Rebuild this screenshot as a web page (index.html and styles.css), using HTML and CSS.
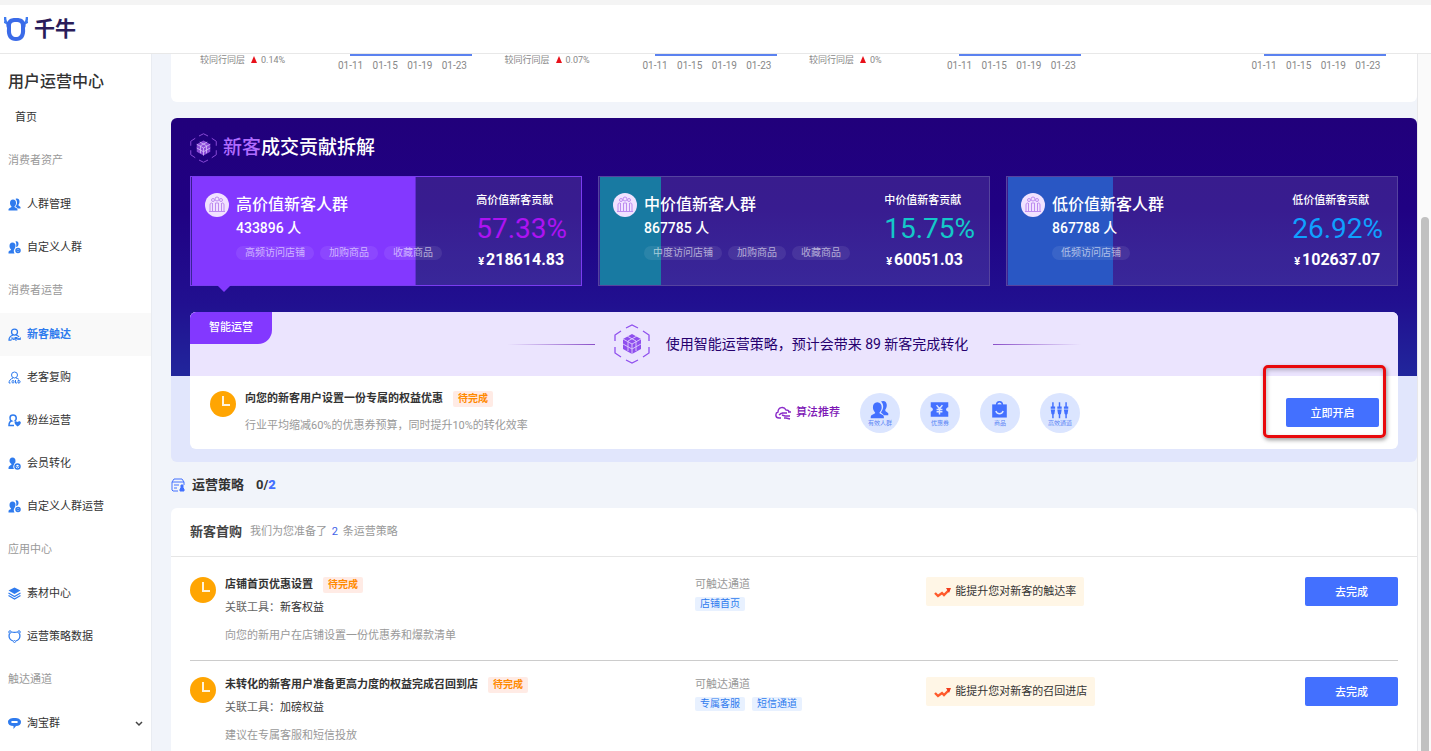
FILE: index.html
```
<!DOCTYPE html>
<html lang="zh-CN">
<head>
    <meta charset="UTF-8">
    <meta name="viewport" content="width=device-width, initial-scale=1.0">
    <title>千牛 - 用户运营中心</title>
    <link rel="stylesheet" href="styles.css">
</head>
<body>

<!-- icon set -->
<svg class="sprite" aria-hidden="true">
    <symbol id="i-group" viewBox="0 0 26 26">
        <path d="M15 2c4-2 8 0 8 5 0 3-1 5-2 6v2l4 3v3h-6c-1-2-3-3-4-4 2-3 3-5 3-8 0-3-1-5-3-7z"/>
        <path d="M10 3c4 0 6 3 6 7 0 3-1 5-3 7v1l5 3c1 1 1 2 1 4H1c0-2 0-3 1-4l5-3v-1c-2-2-3-4-3-7 0-4 2-7 6-7z"/>
    </symbol>
    <symbol id="i-group-plus" viewBox="0 0 26 26">
        <path d="M15 1c4-1 6 1 6 5 0 2-1 4-2 5l-3 1c1-4 1-8-1-11z"/>
        <path d="M9 3c4 0 6 3 6 7 0 2-1 4-2 6-2 2-2 6 0 9H1c0-2 0-4 1-5l4-2v-1c-2-2-3-4-3-7 0-4 2-7 6-7z"/>
        <circle cx="20" cy="19" r="4" fill="none" stroke="currentColor" stroke-width="3"/>
        <path d="M19 16h2v6h-2zM17 18h6v2h-6z"/>
    </symbol>
    <symbol id="i-new" viewBox="0 0 26 26">
        <g fill="none" stroke="currentColor" stroke-width="2.500"><circle cx="13" cy="8" r="6"/><path d="M10 14c-5 2-8 5-8 10h5M16 14c3 1 5 2 6 4"/></g>
        <path d="M8 24v-5l4 5v-5M18 19h-4v5h4M14 21h4M19 19l1 5 2-4 2 4 1-5" fill="none" stroke="currentColor" stroke-width="2"/>
    </symbol>
    <symbol id="i-old" viewBox="0 0 26 26">
        <g fill="none" stroke="currentColor" stroke-width="2"><circle cx="13" cy="8" r="6"/><path d="M10 14c-5 2-8 5-8 10h3M16 14c3 1 5 2 6 3"/>
        <rect x="8" y="19" width="4" height="5" rx="2"/><path d="M15 18v6h3M20 19v5h2c3 0 3-5 0-5z"/></g>
    </symbol>
    <symbol id="i-heart" viewBox="0 0 26 26">
        <path d="M10 2c8 0 8 10 3 12M10 2C2 2 3 12 7 14c-4 1-5 4-5 9h10" fill="none" stroke="currentColor" stroke-width="3"/>
        <path d="M19 25c-9-6-6-12-2-10l2 1c5-5 12 2 0 9z"/>
    </symbol>
    <symbol id="i-member" viewBox="0 0 26 26">
        <path d="M9 1c4 0 6 3 6 7 0 3-1 4-3 6v1c-2 3-2 6 0 9H1c0-3 0-5 2-6l4-3v-1C4 12 3 10 3 8c0-4 2-7 6-7z"/>
        <circle cx="19" cy="19" r="5" fill="none" stroke="currentColor" stroke-width="3"/>
        <path d="M16 17l3 4 3-4" fill="none" stroke="currentColor" stroke-width="2"/>
    </symbol>
    <symbol id="i-layers" viewBox="0 0 26 26">
        <path d="M13 1l12 6-12 7L1 7z"/>
        <path d="M1 12l12 7 12-7M1 17l12 7 12-7" fill="none" stroke="currentColor" stroke-width="2.500"/>
    </symbol>
    <symbol id="i-shield" viewBox="0 0 26 26">
        <path d="M7 4c4 1 8 1 12 0M23 7c2 6 0 12-7 15M10 22C3 19 1 13 3 7" fill="none" stroke="currentColor" stroke-width="2.500"/>
        <g fill="none" stroke="currentColor" stroke-width="2"><circle cx="4" cy="4" r="2.500"/><circle cx="22" cy="4" r="2.500"/><circle cx="13" cy="23" r="2"/></g>
    </symbol>
    <symbol id="i-chat" viewBox="0 0 26 26">
        <path fill-rule="evenodd" d="M13 2c8 0 13 3 13 8s-4 8-10 8l-5 6v-6C4 18 0 15 0 10s5-8 13-8zM8 8c-2 0-2 4 0 4h10c2 0 2-4 0-4z"/>
    </symbol>
    <symbol id="i-cube" viewBox="0 0 36 40">
        <path d="M12 4l6-3 6 3M29 7l6 4v6M35 23v6l-6 4M24 36l-6 3-6-3M7 33l-6-4v-6M1 17v-6l6-4" fill="none" stroke="currentColor" stroke-width="1.300"/>
        <path d="M18 10l9 5v10l-9 5-9-5V15z"/>
        <path class="cube-lines" d="M9 15l9 5 9-5M18 20v10M13 12l9 5v10M23 12l-9 5v10M9 20l9 5 9-5"/>
    </symbol>
    <symbol id="i-crowd" viewBox="0 0 24 24">
        <circle cx="12" cy="12" r="12" fill="#f1e2ff"/>
        <g fill="none" stroke="#bd8cf0" stroke-width="1"><circle cx="12" cy="6" r="2"/><circle cx="8" cy="7" r="1.500"/><circle cx="16" cy="7" r="1.500"/>
        <path d="M10.500 18v-8h3v8M7.500 18v-8M16.500 18v-8M5 18v-6c0-2 1-2 2-2M19 18v-6c0-2-1-2-2-2M4 18.500h16"/></g>
    </symbol>
    <symbol id="i-clock" viewBox="0 0 26 26">
        <circle cx="13" cy="13" r="13" fill="#ffa502"/>
        <path d="M13 5v9h7" fill="none" stroke="#fff3dc" stroke-width="2"/>
    </symbol>
    <symbol id="i-trend" viewBox="0 0 17 12">
        <path d="M1 7l3 3 4-3 2 2 5-5" fill="none" stroke="#ff5a2b" stroke-width="2.400"/>
        <path d="M12 2h5l-2 5z" fill="#f23c1d"/>
    </symbol>
</svg>

<div class="top-strip"></div>
<header class="header">
    <svg class="logo" viewBox="0 0 24 26" aria-hidden="true">
        <path d="M1 1c0 4 1 6 3 7M23 1c0 4-1 6-3 7" fill="none" stroke="#3f7bf0" stroke-width="2.500"/>
        <path d="M0 6l5 2M24 6l-5 2" stroke="#3f7bf0" stroke-width="2"/>
        <path fill="#3b6be8" fill-rule="evenodd" d="M4 5c2-3 5-3 8-3s6 0 8 3c2 2 2 5 1 7 1 9-3 13-9 13S2 21 3 12C2 10 2 7 4 5zM12 6c-4 0-5 1-5 4v5c0 4 2 6 5 6s5-2 5-6v-5c0-3-1-4-5-4z"/>
    </svg>
    <span class="brand">千牛</span>
</header>

<div class="layout">
    <nav class="sidebar">
        <h1>用户运营中心</h1>
        <a class="home" href="#">首页</a>
        <h2>消费者资产</h2>
        <a href="#"><svg><use href="#i-group"/></svg>人群管理</a>
        <a href="#"><svg><use href="#i-group-plus"/></svg>自定义人群</a>
        <h2>消费者运营</h2>
        <a class="active" href="#"><svg><use href="#i-new"/></svg>新客触达</a>
        <a href="#"><svg><use href="#i-old"/></svg>老客复购</a>
        <a href="#"><svg><use href="#i-heart"/></svg>粉丝运营</a>
        <a href="#"><svg><use href="#i-member"/></svg>会员转化</a>
        <a href="#"><svg><use href="#i-group-plus"/></svg>自定义人群运营</a>
        <h2>应用中心</h2>
        <a href="#"><svg><use href="#i-layers"/></svg>素材中心</a>
        <a href="#"><svg><use href="#i-shield"/></svg>运营策略数据</a>
        <h2>触达通道</h2>
        <a href="#"><svg><use href="#i-chat"/></svg>淘宝群
            <svg class="chevron outline" viewBox="0 0 8 8"><path d="M1 2l3 3 3-3" stroke="#444" stroke-width="1.500"/></svg>
        </a>
    </nav>

    <main class="content">
        <section class="trends">
            <div class="trend">
                <div class="compare">较同行同层<i></i>0.14%</div>
                <div class="axis"><div class="axis-line"></div><div class="dates"><span>01-11</span><span>01-15</span><span>01-19</span><span>01-23</span></div></div>
            </div>
            <div class="trend">
                <div class="compare">较同行同层<i></i>0.07%</div>
                <div class="axis"><div class="axis-line"></div><div class="dates"><span>01-11</span><span>01-15</span><span>01-19</span><span>01-23</span></div></div>
            </div>
            <div class="trend">
                <div class="compare">较同行同层<i></i>0%</div>
                <div class="axis"><div class="axis-line"></div><div class="dates"><span>01-11</span><span>01-15</span><span>01-19</span><span>01-23</span></div></div>
            </div>
            <div class="trend">
                <div class="compare"></div>
                <div class="axis"><div class="axis-line"></div><div class="dates"><span>01-11</span><span>01-15</span><span>01-19</span><span>01-23</span></div></div>
            </div>
        </section>

        <section class="panel">
            <h2 class="panel-title"><svg class="cube"><use href="#i-cube"/></svg><span><em>新客</em>成交贡献拆解</span></h2>

            <div class="cards">
                <div class="card high" style="--share: 57.33%">
                    <svg class="crowd"><use href="#i-crowd"/></svg>
                    <div class="people">
                        <h3>高价值新客人群</h3>
                        <p>433896 人</p>
                        <div class="tags"><span>高频访问店铺</span><span>加购商品</span><span>收藏商品</span></div>
                    </div>
                    <div class="share">
                        <h4>高价值新客贡献</h4>
                        <div class="percent">57.33%</div>
                        <div class="amount"><small>¥</small>218614.83</div>
                    </div>
                </div>
                <div class="card mid" style="--share: 15.75%">
                    <svg class="crowd"><use href="#i-crowd"/></svg>
                    <div class="people">
                        <h3>中价值新客人群</h3>
                        <p>867785 人</p>
                        <div class="tags"><span>中度访问店铺</span><span>加购商品</span><span>收藏商品</span></div>
                    </div>
                    <div class="share">
                        <h4>中价值新客贡献</h4>
                        <div class="percent">15.75%</div>
                        <div class="amount"><small>¥</small>60051.03</div>
                    </div>
                </div>
                <div class="card low" style="--share: 26.92%">
                    <svg class="crowd"><use href="#i-crowd"/></svg>
                    <div class="people">
                        <h3>低价值新客人群</h3>
                        <p>867788 人</p>
                        <div class="tags"><span>低频访问店铺</span></div>
                    </div>
                    <div class="share">
                        <h4>低价值新客贡献</h4>
                        <div class="percent">26.92%</div>
                        <div class="amount"><small>¥</small>102637.07</div>
                    </div>
                </div>
            </div>

            <div class="smart">
                <div class="smart-banner">
                    <span class="smart-tab">智能运营</span>
                    <i class="line left"></i>
                    <svg class="cube"><use href="#i-cube"/></svg>
                    <span>使用智能运营策略，预计会带来 89 新客完成转化</span>
                    <i class="line right"></i>
                </div>
                <div class="smart-task">
                    <div class="task-info">
                        <svg class="clock"><use href="#i-clock"/></svg>
                        <div>
                            <h3>向您的新客用户设置一份专属的权益优惠<span class="todo">待完成</span></h3>
                            <p class="desc">行业平均缩减60%的优惠券预算，同时提升10%的转化效率</p>
                        </div>
                    </div>
                    <div class="algorithm">
                        <span class="algo-label">
                            <svg class="outline" viewBox="0 0 17 14" stroke="#8a2bc9" stroke-width="1.400"><path d="M6 12H4c-4 0-4-5-1-6 0-5 6-6 8-2 2 0 3 1 3 2M4 9c1-1 2-2 4-2M7 7h5M7 9l3 1h5M9 12h2l4 1M13 6h3"/></svg>
                            算法推荐
                        </span>
                        <span class="bubble"><svg viewBox="0 0 26 26"><use href="#i-group"/></svg>有效人群</span>
                        <span class="bubble"><svg viewBox="0 0 26 26"><path d="M1 3h24v7c-4 1-4 5 0 6v7H1v-7c4-1 4-5 0-6z"/><path d="M9 7l4 5 4-5M13 12v8M9 13h8M9 16h8" fill="none" stroke="#dbe5ff" stroke-width="2"/></svg>优惠券</span>
                        <span class="bubble"><svg viewBox="0 0 26 26"><path d="M3 6h20v18H3z"/><path d="M9 7c0-6 8-6 8 0" fill="none" stroke="#4370ff" stroke-width="2"/><path d="M8 15c2 5 8 5 10 0" fill="none" stroke="#dbe5ff" stroke-width="2"/></svg>商品</span>
                        <span class="bubble"><svg viewBox="0 0 26 26"><path d="M3 3h2v6h2v3H1V9h2zM1 13h6l-1 6-1 1v5H3v-5l-1-1zM12 3h2v6h2v3h-6V9h2zM10 13h6l-1 6-1 1v5h-2v-5l-1-1zM21 3h2v6h2v3h-6V9h2zM19 13h6l-1 6-1 1v5h-2v-5l-1-1z"/></svg>高效通道</span>
                    </div>
                    <div class="start">
                        <button class="btn" type="button">立即开启</button>
                        <div class="marker"></div>
                    </div>
                </div>
            </div>
        </section>

        <h2 class="strategy-title">
            <svg class="outline" viewBox="0 0 14 14" stroke="#4370ff" stroke-width="1"><path d="M13 7V4L11 1H3L1 4v8l1 1h5M1 4h12M3 7h5M3 10h3"/><path d="M10 7h2v3l1 1v2H9v-2l1-1z" fill="#4370ff"/></svg>
            运营策略 <span class="count">0/<b>2</b></span>
        </h2>

        <section class="strategies">
            <div class="strategies-head">
                <h3>新客首购</h3>
                <p>我们为您准备了 <b>2</b> 条运营策略</p>
            </div>
            <div class="strategy-list">
                <div class="strategy">
                    <div class="task-info">
                        <svg class="clock"><use href="#i-clock"/></svg>
                        <div>
                            <h3>店铺首页优惠设置<span class="todo">待完成</span></h3>
                            <p class="tool">关联工具：<span>新客权益</span></p>
                            <p class="desc">向您的新用户在店铺设置一份优惠券和爆款清单</p>
                        </div>
                    </div>
                    <div class="channel">
                        <h4>可触达通道</h4>
                        <span>店铺首页</span>
                    </div>
                    <div><span class="effect"><svg><use href="#i-trend"/></svg>能提升您对新客的触达率</span></div>
                    <button class="btn" type="button">去完成</button>
                </div>
                <div class="strategy">
                    <div class="task-info">
                        <svg class="clock"><use href="#i-clock"/></svg>
                        <div>
                            <h3>未转化的新客用户准备更高力度的权益完成召回到店<span class="todo">待完成</span></h3>
                            <p class="tool">关联工具：<span>加磅权益</span></p>
                            <p class="desc">建议在专属客服和短信投放</p>
                        </div>
                    </div>
                    <div class="channel">
                        <h4>可触达通道</h4>
                        <span>专属客服</span><span>短信通道</span>
                    </div>
                    <div><span class="effect"><svg><use href="#i-trend"/></svg>能提升您对新客的召回进店</span></div>
                    <button class="btn" type="button">去完成</button>
                </div>
            </div>
        </section>
    </main>

    <div class="scrollbar"><div class="thumb"></div></div>
</div>

</body>
</html>
```
FILE: styles.css
```
* {
    box-sizing: border-box;
}
body {
    margin: 0;
    height: 100vh;
    display: flex;
    flex-direction: column;
    overflow: hidden;
    background-color: #f1f4fa;
    color: #333;
    font-family: Roboto, "Noto Sans CJK SC", sans-serif;
    font-size: 11px;
    line-height: 16px;
}
h1, h2, h3, h4, p {
    margin: 0;
    font-size: 11px;
    font-weight: normal;
}
svg {
    flex: none;
    fill: currentColor;
}
.outline {
    fill: none;
}
.sprite {
    position: absolute;
    width: 0;
    height: 0;
}

/* header */
.top-strip {
    flex: none;
    height: 5px;
    background-color: #f4f4f4;
}
.header {
    flex: none;
    display: flex;
    align-items: center;
    gap: 6px;
    height: 49px;
    padding-left: 4px;
    background-color: white;
    border-bottom: 1px solid #e8e8e8;
}
.logo {
    width: 24px;
    height: 26px;
}
.brand {
    font-size: 21px;
    font-weight: bold;
    line-height: 28px;
    color: #2a1c5a;
}
.layout {
    flex: 1;
    min-height: 0;
    display: flex;
}

/* sidebar */
.sidebar {
    flex: none;
    width: 152px;
    background-color: white;
    border-right: 1px solid #e9ecf2;
    overflow: hidden;
}
.sidebar h1 {
    padding: 14px 8px 0;
    font-size: 16px;
    font-weight: 500;
    line-height: 28px;
}
.sidebar h2 {
    padding-left: 8px;
    line-height: 43px;
    color: #999;
}
.sidebar h2 + a {
    margin-top: 1px;
}
.sidebar a {
    display: flex;
    align-items: center;
    gap: 6px;
    height: 43px;
    padding: 0 8px;
    color: #333;
    text-decoration: none;
}
.sidebar a svg {
    width: 13px;
    height: 13px;
    color: #2f7bee;
}
.sidebar .home {
    padding-left: 15px;
}
.sidebar .active {
    background-color: #f9f9f9;
    color: #2f7bee;
    font-weight: bold;
}
.sidebar a .chevron {
    width: 8px;
    height: 8px;
    margin-left: auto;
}

.content {
    flex: 1;
    min-width: 0;
    padding-left: 19px;
    overflow: hidden;
}

/* trend charts */
.trends {
    display: grid;
    grid-template-columns: repeat(4, 1fr);
    height: 48px;
    padding: 0 14px;
    background-color: white;
    border-radius: 0 0 6px 6px;
}
.trend {
    display: flex;
    padding-left: 15px;
    color: #888;
}
.compare {
    width: 138px;
    font-size: 9px;
    line-height: 12px;
}
.compare i {
    display: inline-block;
    margin: 0 4px 0 6px;
    border: 3px solid transparent;
    border-top: 0;
    border-bottom: 7px solid #e8111a;
}
.axis {
    width: 129px;
}
.axis-line {
    height: 2px;
    margin: 0 -5px 0 12px;
    background-color: #5b82f0;
}
.dates {
    display: flex;
    justify-content: space-between;
    padding-top: 4px;
    font-size: 10px;
    line-height: 12px;
}

/* contribution panel */
.panel {
    margin-top: 16px;
    padding: 0 19px 13px;
    border-radius: 6px;
    background: linear-gradient(#21007b, #200183 35%, #211090 72%, #21269c) no-repeat top / 100% 258px, #e1e6fc;
}
.panel-title {
    display: flex;
    align-items: center;
    gap: 6px;
    height: 58px;
    padding-top: 2px;
    font-size: 19px;
    font-weight: 500;
    line-height: 28px;
    color: white;
}
.panel-title em {
    font-style: normal;
    color: #b06cff;
}
.cube {
    width: 36px;
    height: 40px;
    color: #8f4fee;
}
.panel-title .cube {
    width: 27px;
    height: 30px;
    color: #8b4bd8;
}
.cube-lines {
    fill: none;
    stroke: #d9c4fb;
    stroke-width: 1px;
}
.cards {
    display: grid;
    grid-template-columns: repeat(3, 1fr);
    gap: 16px;
}
.card {
    position: relative;
    display: flex;
    height: 110px;
    padding: 16px 14px 0;
    border: 1px solid #56439f;
    background: linear-gradient(var(--fill), var(--fill)) no-repeat 1px 0 / var(--share) 100%, rgba(255, 255, 255, 0.11);
    color: white;
}
.high {
    --fill: #8338ff;
    border-color: #7b3cf0;
}
.high::after {
    content: "";
    position: absolute;
    left: 26px;
    top: 108px;
    border: 7px solid transparent;
    border-top-color: #8338ff;
    border-bottom: 0;
}
.mid {
    --fill: #187aa2;
}
.low {
    --fill: #2957c4;
}
.crowd {
    width: 24px;
    height: 24px;
}
.people {
    flex: 1;
    padding-left: 7px;
}
.people h3 {
    font-size: 16px;
    font-weight: 500;
    line-height: 24px;
}
.people p {
    font-size: 14px;
    font-weight: 500;
    line-height: 22px;
}
.tags {
    display: flex;
    gap: 6px;
    margin-top: 7px;
}
.tags span {
    padding: 0 9px;
    border-radius: 7px;
    background-color: rgba(255, 255, 255, 0.08);
    color: rgba(255, 255, 255, 0.6);
    font-size: 10px;
    line-height: 14px;
    white-space: nowrap;
}
.share h4 {
    font-weight: 500;
    line-height: 16px;
}
.percent {
    margin-top: 4px;
    font-size: 28px;
    line-height: 32px;
}
.high .percent {
    color: #ad12f2;
}
.mid .percent {
    color: #14c8c8;
}
.low .percent {
    color: #0fa0ff;
}
.amount {
    margin-top: 3px;
    font-size: 16px;
    font-weight: bold;
    line-height: 24px;
}
.amount small {
    padding: 0 2px;
    font-size: 11px;
}

/* smart operation box */
.smart {
    margin-top: 26px;
    border-radius: 6px;
    background-color: white;
}
.smart-banner {
    position: relative;
    display: flex;
    align-items: center;
    justify-content: center;
    height: 64px;
    border-radius: 6px 6px 0 0;
    background-color: #ebe4fe;
    color: #26006e;
    font-size: 14px;
    line-height: 22px;
}
.smart-banner .cube {
    margin: 0 16px 0 19px;
}
.smart-tab {
    position: absolute;
    left: 0;
    top: 0;
    padding: 0 19px;
    border-radius: 6px 0 14px 0;
    background-color: #8338ff;
    color: white;
    font-size: 11px;
    font-weight: 500;
    line-height: 32px;
}
.line {
    width: 88px;
    height: 1px;
}
.line.left {
    background: linear-gradient(to left, #8a4fc8, transparent);
}
.line.right {
    margin-left: 25px;
    background: linear-gradient(to right, #8a4fc8, transparent);
}
.smart-task {
    display: grid;
    grid-template-columns: 21fr 19fr auto;
    padding: 15px 19px 15px 20px;
}
.task-info {
    display: flex;
    gap: 9px;
}
.task-info h3 {
    display: flex;
    gap: 10px;
    font-weight: bold;
    color: #333;
}
.clock {
    width: 26px;
    height: 26px;
}
.todo {
    padding: 0 5px;
    border-radius: 2px;
    background-color: #ffebe5;
    color: #ff8a00;
    font-size: 10px;
}
.desc {
    margin-top: 12px;
    color: #999;
}
.smart-task .desc {
    margin-top: 11px;
}
.algorithm {
    display: flex;
    align-items: center;
    gap: 20px;
}
.algo-label {
    display: flex;
    align-items: center;
    gap: 4px;
    color: #7d17b5;
    font-weight: 500;
}
.algo-label svg {
    width: 17px;
    height: 14px;
}
.bubble {
    display: flex;
    flex-direction: column;
    align-items: center;
    width: 40px;
    height: 40px;
    padding-top: 7px;
    border-radius: 20px;
    background-color: #dbe5ff;
    color: #5c86f5;
    font-size: 6px;
    line-height: 8px;
}
.bubble svg {
    width: 19px;
    height: 19px;
    fill: #4370ff;
}
.start {
    position: relative;
    align-self: center;
}
.btn {
    display: block;
    width: 93px;
    height: 29px;
    padding: 0 0 2px;
    border: none;
    border-radius: 2px;
    background-color: #4370ff;
    color: white;
    font-family: inherit;
    font-size: 11px;
    font-weight: 500;
    cursor: pointer;
}
.btn:hover {
    background-color: #2f5df0;
}
.marker {
    position: absolute;
    top: -33px;
    right: -7px;
    bottom: -11px;
    left: -23px;
    border: 3px solid #e8090c;
    border-radius: 5px;
    box-shadow: 1px 2px 4px rgba(0, 0, 0, 0.4), inset 1px 2px 4px rgba(0, 0, 0, 0.25);
    pointer-events: none;
}

/* strategy list */
.strategy-title {
    display: flex;
    align-items: center;
    gap: 7px;
    height: 46px;
    font-size: 13px;
    font-weight: bold;
}
.strategy-title svg {
    width: 14px;
    height: 14px;
}
.strategy-title .count {
    margin-left: 5px;
}
.strategy-title b {
    color: #4370ff;
}
.strategies {
    border-radius: 6px 6px 0 0;
    background-color: white;
}
.strategies-head {
    display: flex;
    align-items: center;
    gap: 8px;
    height: 49px;
    padding: 0 19px;
    border-bottom: 1px solid #e6e6e6;
}
.strategies-head h3 {
    font-size: 13px;
    font-weight: bold;
    color: #444;
}
.strategies-head p {
    color: #999;
}
.strategies-head b {
    margin: 0 2px;
    font-weight: normal;
    color: #4263e8;
}
.strategy-list {
    padding: 4px 19px 0;
}
.strategy {
    display: grid;
    grid-template-columns: 24fr 11fr 18fr auto;
    padding: 16px 0;
    border-bottom: 1px solid #ccc;
}
.tool {
    margin-top: 7px;
    color: #666;
}
.tool span {
    color: #333;
}
.channel h4 {
    margin-bottom: 3px;
    color: #999;
}
.channel span {
    display: inline-block;
    margin-right: 7px;
    padding: 0 5px;
    border-radius: 2px;
    background-color: #e8f1ff;
    color: #2f7bee;
    font-size: 10px;
    line-height: 14px;
}
.effect {
    display: inline-flex;
    align-items: center;
    gap: 4px;
    height: 29px;
    padding: 0 8px;
    border-radius: 2px;
    background-color: #fff6e6;
}
.effect svg {
    width: 17px;
    height: 12px;
}

/* scrollbar */
.scrollbar {
    flex: none;
    display: flex;
    width: 14px;
    padding: 163px 2px 0 3px;
    border-left: 1px solid #e8e8ea;
    background-color: #fafafa;
}
.thumb {
    flex: 1;
    border-radius: 4px 4px 0 0;
    background-color: #c1c1c1;
}
```
